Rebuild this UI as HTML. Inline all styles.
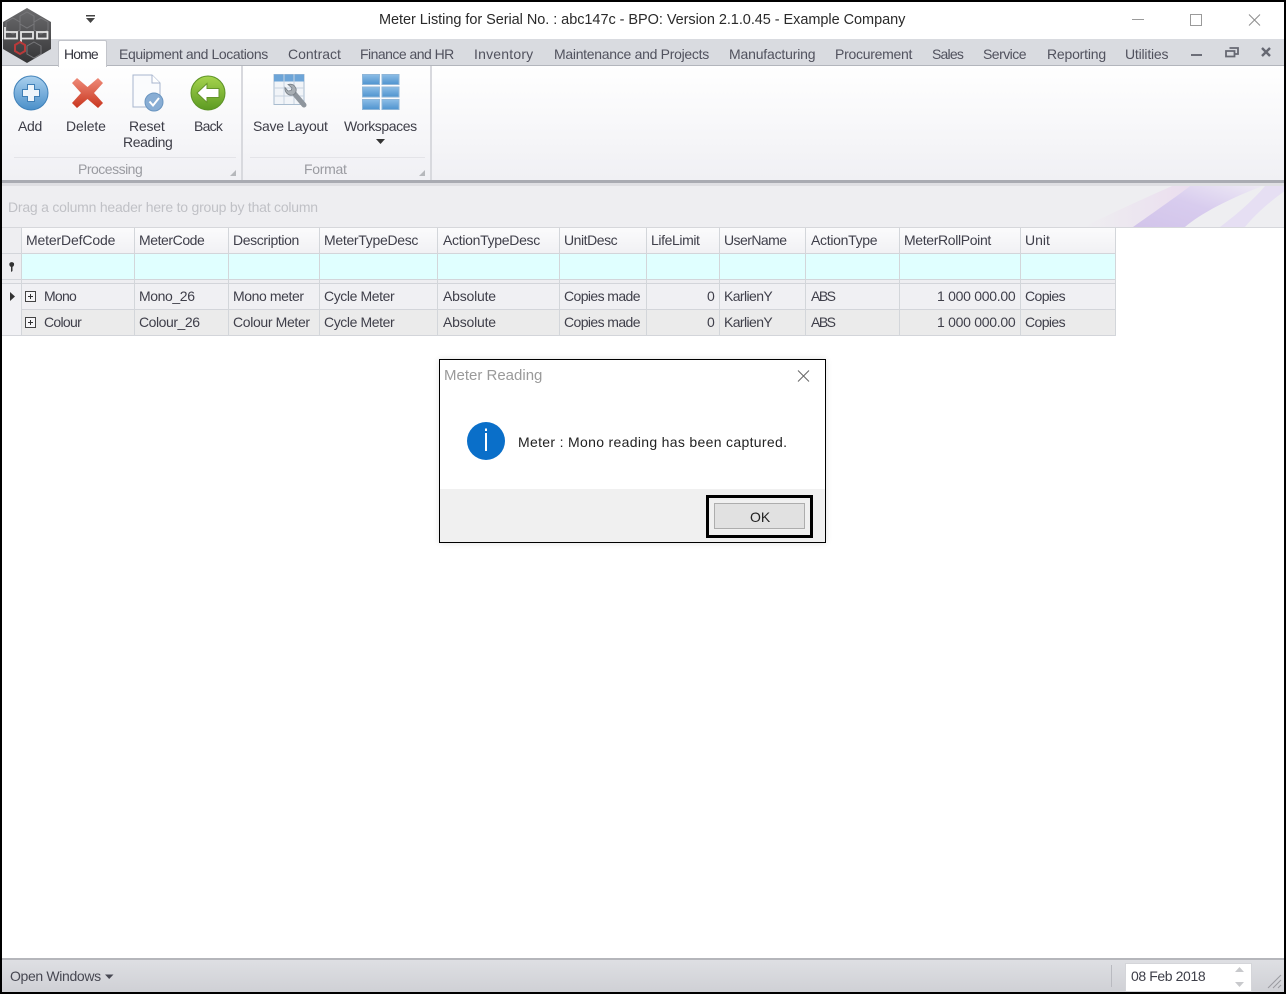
<!DOCTYPE html>
<html><head><meta charset="utf-8">
<style>
html,body{margin:0;padding:0;background:#fff}
#p{position:relative;width:1286px;height:994px;overflow:hidden;background:#fff;font-family:"Liberation Sans",sans-serif;font-size:14px;color:#3b3b45}
#p div,#p span.t{position:absolute}
.t{white-space:nowrap;line-height:16px}
.tab{top:46px;color:#51525e}
.rb{top:118px;color:#3d3d47}
.h{top:232px;color:#3f3f4a}
.c{color:#3f3f4a}
.v{background:#d3d6da;width:1px}
</style></head><body>
<div id="p">
<!-- ribbon tab strip -->
<div style="left:0;top:39px;width:1286px;height:26px;background:#d9dbe0"></div>
<div style="left:0;top:65px;width:1286px;height:1px;background:#b3b6bd"></div>
<!-- ribbon body -->
<div style="left:0;top:66px;width:1286px;height:114px;background:linear-gradient(#ffffff,#f0f0f4)"></div>
<div style="left:0;top:180px;width:1286px;height:3px;background:#a9abb2"></div>
<div style="left:0;top:183px;width:1286px;height:3px;background:#dfdfe3"></div>
<div style="left:241px;top:66px;width:2px;height:114px;background:#d8d9de"></div>
<div style="left:430px;top:66px;width:2px;height:114px;background:#d8d9de"></div>
<div style="left:14px;top:157px;width:222px;height:1px;background:#e4e4e8"></div>
<div style="left:250px;top:157px;width:175px;height:1px;background:#e4e4e8"></div>
<!-- Home tab -->
<div style="left:58px;top:40px;width:47px;height:26px;background:#fff;border:1px solid #c3c5cb;border-bottom:none;border-radius:2px 2px 0 0"></div>
<span class="t" style="left:64px;top:46px;color:#33333d;letter-spacing:-.9px">Home</span>
<span class="t tab" style="left:119px;letter-spacing:-.4px">Equipment and Locations</span>
<span class="t tab" style="left:288px">Contract</span>
<span class="t tab" style="left:360px;letter-spacing:-.53px">Finance and HR</span>
<span class="t tab" style="left:474px;letter-spacing:.2px">Inventory</span>
<span class="t tab" style="left:554px;letter-spacing:-.29px">Maintenance and Projects</span>
<span class="t tab" style="left:729px;letter-spacing:-.18px">Manufacturing</span>
<span class="t tab" style="left:835px;letter-spacing:-.27px">Procurement</span>
<span class="t tab" style="left:932px;letter-spacing:-.8px">Sales</span>
<span class="t tab" style="left:983px;letter-spacing:-.53px">Service</span>
<span class="t tab" style="left:1047px;letter-spacing:-.2px">Reporting</span>
<span class="t tab" style="left:1125px;letter-spacing:-.2px">Utilities</span>

<span class="t" style="left:379px;top:12px;font-size:14.5px;color:#2a2a2a;letter-spacing:-.05px">Meter Listing for Serial No. : abc147c - BPO: Version 2.1.0.45 - Example Company</span>

<svg style="position:absolute;left:0;top:0" width="1286" height="994" viewBox="0 0 1286 994">
<defs>
<linearGradient id="bl" x1="0" y1="0" x2="0" y2="1"><stop offset="0" stop-color="#aad0ee"/><stop offset="1" stop-color="#4a8fc9"/></linearGradient>
<linearGradient id="gr" x1="0" y1="0" x2="0" y2="1"><stop offset="0" stop-color="#a6d44e"/><stop offset="1" stop-color="#5c9a22"/></linearGradient>
<linearGradient id="rd" x1="0" y1="0" x2="0" y2="1"><stop offset="0" stop-color="#ee8a78"/><stop offset="1" stop-color="#c9361f"/></linearGradient>
<linearGradient id="wb" x1="0" y1="0" x2="0" y2="1"><stop offset="0" stop-color="#8cbde6"/><stop offset="1" stop-color="#4f94cf"/></linearGradient>
<linearGradient id="lg" x1="0" y1="0" x2="0" y2="1"><stop offset="0" stop-color="#6c6c6e"/><stop offset="1" stop-color="#343436"/></linearGradient>
</defs>
<!-- logo -->
<polygon points="27,8 51,22 51,49 27,63 3,49 3,22" fill="url(#lg)"/>
<g fill="none" stroke="#77777a" stroke-width="1">
<polygon points="27,12 34,16 34,24 27,28 20,24 20,16"/><polygon points="13,18 20,22 20,30 13,34 6,30 6,22"/><polygon points="41,18 48,22 48,30 41,34 34,30 34,22"/>
<polygon points="34,42 41,46 41,54 34,58 27,54 27,46"/>
</g>
<g fill="none" stroke="#e6e6e6" stroke-width="1.8">
<path d="M5,27V38.5H17V32H5"/><path d="M21,42V32H33V38.5H21"/><path d="M37,32H47.5V38.5H37Z"/>
</g>
<polygon points="20,42 25,45 25,51 20,54 15,51 15,45" fill="none" stroke="#b83a3a" stroke-width="2"/>
<!-- qat arrow -->
<rect x="86" y="15" width="9" height="1.5" fill="#444"/><polygon points="86,18 95,18 90.5,23" fill="#444"/>
<!-- window controls -->
<path d="M1132,19.5H1144" stroke="#9a9a9a" fill="none"/>
<rect x="1190.5" y="14.5" width="11" height="11" fill="none" stroke="#9a9a9a"/>
<path d="M1249,14.5L1260,25.5M1260,14.5L1249,25.5" stroke="#8c8c8c" fill="none"/>
<!-- mdi controls -->
<rect x="1191" y="54" width="11" height="2" fill="#6c6e78"/>
<path d="M1229.5,48H1238V54H1235M1226,51H1234.5V56.5H1226Z" fill="none" stroke="#666872" stroke-width="1.8"/>
<path d="M1262,48L1270,56M1270,48L1262,56" stroke="#666872" stroke-width="2.4" fill="none"/>
<!-- Add -->
<circle cx="31" cy="93" r="17" fill="url(#bl)" stroke="#3f80b8"/>
<path d="M27.5,84.5H34.5V89.5H39.5V96.5H34.5V101.5H27.5V96.5H22.5V89.5H27.5Z" fill="#eef5fb" stroke="#3f7fb6"/>
<!-- Delete -->
<path d="M72,83L77,78L87.5,87L98,78L103,83L94,93L103,103L98,108L87.5,99L77,108L72,103L81,93Z" fill="url(#rd)"/>
<!-- Reset Reading -->
<path d="M133,75H152L160,83V107H133Z" fill="#fafbfd" stroke="#a8b6ce"/>
<path d="M152,75V83H160" fill="#fff" stroke="#a8b6ce"/>
<circle cx="154" cy="102" r="9" fill="#88add4" stroke="#6a95c0"/>
<path d="M149.5,101.5L153,105.5L159,98" fill="none" stroke="#fff" stroke-width="2"/>
<!-- Back -->
<circle cx="208" cy="93" r="17" fill="url(#gr)" stroke="#5c9226"/>
<path d="M197,93L207,83.5V88.5H219V97.5H207V102.5Z" fill="#fff" stroke="#65952a"/>
<!-- Save Layout -->
<rect x="274" y="74.5" width="30" height="30" fill="#f1f4f8" stroke="#a9bccf"/>
<rect x="274" y="74.5" width="30" height="7" fill="#6da5d8"/>
<path d="M284,74V104M294,74V104M274,88H304M274,96H304" stroke="#c6d2df" fill="none"/>
<path d="M293,92L304,105" stroke="#8e959d" stroke-width="5" stroke-linecap="round" fill="none"/>
<path d="M288,84.5L292,88L291,90.5L288,91L285,87.5C284.5,92 288,96 292.5,95C296,94 297,90 295.5,87.5C294,84.5 291,83.8 288,84.5Z" fill="#a8aeb4" stroke="#777e86" stroke-width=".8"/>
<!-- Workspaces -->
<g fill="url(#wb)" stroke="#8fb6d8">
<rect x="362.5" y="74.5" width="17" height="10"/><rect x="382" y="74.5" width="17" height="10"/>
<rect x="362.5" y="87" width="17" height="10"/><rect x="382" y="87" width="17" height="10"/>
<rect x="362.5" y="99.5" width="17" height="10"/><rect x="382" y="99.5" width="17" height="10"/>
</g>
<polygon points="376,139 385,139 380.5,144" fill="#333"/>
<!-- ribbon corner glyphs -->
<polygon points="236,170 236,176 230,176" fill="#b6b8bc"/>
<polygon points="425,170 425,176 419,176" fill="#b6b8bc"/>
</svg>

<span class="t rb" style="left:18px;letter-spacing:-.3px">Add</span>
<span class="t rb" style="left:66px;letter-spacing:-.1px">Delete</span>
<span class="t rb" style="left:129px;letter-spacing:-.2px">Reset</span>
<span class="t rb" style="left:123px;top:134px;letter-spacing:-.4px">Reading</span>
<span class="t rb" style="left:194px;letter-spacing:-.75px">Back</span>
<span class="t rb" style="left:253px;letter-spacing:-.3px">Save Layout</span>
<span class="t rb" style="left:344px;letter-spacing:-.4px">Workspaces</span>
<span class="t" style="left:78px;top:161px;color:#9a9ba1;letter-spacing:-.5px">Processing</span>
<span class="t" style="left:304px;top:161px;color:#9a9ba1;letter-spacing:-.3px">Format</span>

<!-- group panel -->
<div style="left:0;top:186px;width:1286px;height:41px;background:#eeeef1"></div>
<svg style="position:absolute;left:1050px;top:186px" width="236" height="41" viewBox="0 0 236 41">
<defs>
<linearGradient id="pk" x1="0" y1="0" x2="1" y2="0"><stop offset="0" stop-color="#eeeef1"/><stop offset="1" stop-color="#ead9ee"/></linearGradient>
<linearGradient id="pu" x1="0" y1="1" x2="1" y2="0"><stop offset="0" stop-color="#d2c4ea"/><stop offset=".5" stop-color="#d8ccee"/><stop offset="1" stop-color="#eeeaf5"/></linearGradient>
</defs>
<path d="M33,41C60,28 95,12 122,0H172C150,12 110,28 83,41Z" fill="url(#pk)"/>
<path d="M83,41C110,22 130,8 140,0H213C180,12 150,28 135,41Z" fill="url(#pu)"/>
<path d="M170,41C190,26 205,12 215,0H236V4C222,14 205,28 195,41Z" fill="#e6dff3"/>
</svg>
<span class="t" style="left:8px;top:199px;color:#c0c1c6;letter-spacing:-.22px">Drag a column header here to group by that column</span>
<div style="left:0;top:227px;width:1286px;height:1px;background:#d6d7db"></div>

<!-- grid -->
<div style="left:0;top:228px;width:1116px;height:25px;background:linear-gradient(#fbfbfc,#f1f1f4)"></div>
<div style="left:0;top:228px;width:22px;height:25px;background:#eeeef1"></div>
<div style="left:0;top:253px;width:1116px;height:1px;background:#d3d5da"></div>
<div style="left:0;top:254px;width:22px;height:26px;background:#eeeef1"></div>
<div style="left:22px;top:254px;width:1094px;height:25px;background:#e0ffff"></div>
<div style="left:0;top:279px;width:1116px;height:1px;background:#d3d5da"></div>
<div style="left:0;top:280px;width:1116px;height:3px;background:#eeeef1"></div>
<div style="left:0;top:283px;width:1116px;height:1px;background:#d3d5da"></div>
<div style="left:0;top:284px;width:1116px;height:25px;background:#f0f0f3"></div>
<div style="left:0;top:309px;width:1116px;height:1px;background:#d3d5da"></div>
<div style="left:0;top:310px;width:1116px;height:25px;background:#ebebeb"></div>
<div style="left:0;top:284px;width:22px;height:51px;background:#f1f1f4"></div>
<div style="left:0;top:335px;width:1116px;height:1px;background:#d3d5da"></div>
<div class="v" style="left:21px;top:228px;height:108px"></div>
<div class="v" style="left:134px;top:228px;height:108px"></div>
<div class="v" style="left:228px;top:228px;height:108px"></div>
<div class="v" style="left:319px;top:228px;height:108px"></div>
<div class="v" style="left:437px;top:228px;height:108px"></div>
<div class="v" style="left:559px;top:228px;height:108px"></div>
<div class="v" style="left:646px;top:228px;height:108px"></div>
<div class="v" style="left:719px;top:228px;height:108px"></div>
<div class="v" style="left:805px;top:228px;height:108px"></div>
<div class="v" style="left:899px;top:228px;height:108px"></div>
<div class="v" style="left:1020px;top:228px;height:108px"></div>
<div class="v" style="left:1115px;top:228px;height:108px"></div>

<span class="t h" style="left:26px;letter-spacing:-.15px">MeterDefCode</span>
<span class="t h" style="left:139px;letter-spacing:-.43px">MeterCode</span>
<span class="t h" style="left:233px;letter-spacing:-.37px">Description</span>
<span class="t h" style="left:324px;letter-spacing:-.3px">MeterTypeDesc</span>
<span class="t h" style="left:443px;letter-spacing:-.3px">ActionTypeDesc</span>
<span class="t h" style="left:564px;letter-spacing:-.45px">UnitDesc</span>
<span class="t h" style="left:651px;letter-spacing:-.4px">LifeLimit</span>
<span class="t h" style="left:724px;letter-spacing:-.55px">UserName</span>
<span class="t h" style="left:811px;letter-spacing:-.3px">ActionType</span>
<span class="t h" style="left:904px;letter-spacing:-.35px">MeterRollPoint</span>
<span class="t h" style="left:1025px">Unit</span>

<span class="t c" style="left:44px;top:288px;letter-spacing:-.75px">Mono</span>
<span class="t c" style="left:139px;top:288px;letter-spacing:-.4px">Mono_26</span>
<span class="t c" style="left:233px;top:288px;letter-spacing:-.4px">Mono meter</span>
<span class="t c" style="left:324px;top:288px;letter-spacing:-.4px">Cycle Meter</span>
<span class="t c" style="left:443px;top:288px;letter-spacing:-.2px">Absolute</span>
<span class="t c" style="left:564px;top:288px;letter-spacing:-.6px">Copies made</span>
<span class="t c" style="left:707px;top:288px">0</span>
<span class="t c" style="left:724px;top:288px;letter-spacing:-.6px">KarlienY</span>
<span class="t c" style="left:811px;top:288px;letter-spacing:-1.5px">ABS</span>
<span class="t c" style="left:937px;top:288px;letter-spacing:-.28px">1 000 000.00</span>
<span class="t c" style="left:1025px;top:288px;letter-spacing:-.6px">Copies</span>

<span class="t c" style="left:44px;top:314px;letter-spacing:-.7px">Colour</span>
<span class="t c" style="left:139px;top:314px;letter-spacing:-.45px">Colour_26</span>
<span class="t c" style="left:233px;top:314px;letter-spacing:-.35px">Colour Meter</span>
<span class="t c" style="left:324px;top:314px;letter-spacing:-.4px">Cycle Meter</span>
<span class="t c" style="left:443px;top:314px;letter-spacing:-.2px">Absolute</span>
<span class="t c" style="left:564px;top:314px;letter-spacing:-.6px">Copies made</span>
<span class="t c" style="left:707px;top:314px">0</span>
<span class="t c" style="left:724px;top:314px;letter-spacing:-.6px">KarlienY</span>
<span class="t c" style="left:811px;top:314px;letter-spacing:-1.5px">ABS</span>
<span class="t c" style="left:937px;top:314px;letter-spacing:-.28px">1 000 000.00</span>
<span class="t c" style="left:1025px;top:314px;letter-spacing:-.6px">Copies</span>

<svg style="position:absolute;left:0;top:250px" width="40" height="90" viewBox="0 250 40 90">
<path d="M9.5,263H14L12.5,267V271L11,272V267Z" fill="#333"/>
<circle cx="11.7" cy="264.5" r="2.4" fill="#333"/>
<polygon points="10,292 15,296.5 10,301" fill="#333"/>
<rect x="25.5" y="291.5" width="10" height="10" fill="#f6f6f8" stroke="#444"/>
<path d="M28,296.5H33M30.5,294V299" stroke="#333" fill="none"/>
<rect x="25.5" y="317.5" width="10" height="10" fill="#f6f6f8" stroke="#444"/>
<path d="M28,322.5H33M30.5,320V325" stroke="#333" fill="none"/>
</svg>

<!-- status bar -->
<div style="left:0;top:958px;width:1286px;height:2px;background:#b5b6bb"></div>
<div style="left:0;top:960px;width:1286px;height:33px;background:linear-gradient(#dedfe3,#cfd0d5)"></div>
<span class="t" style="left:10px;top:968px;color:#474852;letter-spacing:-.35px">Open Windows</span>
<div style="left:1125px;top:963px;width:125px;height:27px;background:#fff;border:1px solid #d4d5d9"></div>
<svg style="position:absolute;left:0;top:950px" width="1286" height="44" viewBox="0 950 1286 44">
<polygon points="105,974.5 113.5,974.5 109.2,979" fill="#474852"/>
<rect x="1111" y="965" width="1" height="22" fill="#b9bac0"/>
<path d="M1268,988L1281,975M1273,988L1281,980M1278,988L1281,985" stroke="#9a9ba0" fill="none"/>
<polygon points="1235,972 1244,972 1239.5,967" fill="#c8c9cc"/>
<polygon points="1235,982 1244,982 1239.5,987" fill="#c8c9cc"/>
</svg>
<span class="t" style="left:1131px;top:968px;color:#3d3e48;letter-spacing:-.4px">08 Feb 2018</span>

<!-- dialog -->
<div style="left:439px;top:359px;width:385px;height:182px;background:#fff;border:1px solid #000;box-shadow:0 0 6px rgba(0,0,0,.12)"></div>
<div style="left:440px;top:489px;width:385px;height:53px;background:#f0f0f0"></div>
<span class="t" style="left:444px;top:368px;font-size:15px;color:#9a9a9a">Meter Reading</span>
<svg style="position:absolute;left:430px;top:350px" width="410" height="200" viewBox="430 350 410 200">
<path d="M798,370.5L809,381.5M809,370.5L798,381.5" stroke="#666" fill="none"/>
<circle cx="486" cy="441" r="19" fill="#0a6fc9"/>
<rect x="485" y="433" width="2" height="18" fill="#fff"/><rect x="485" y="428.5" width="2" height="2.5" fill="#fff"/>
</svg>
<span class="t" style="left:518px;top:434px;color:#222;letter-spacing:.32px">Meter : Mono reading has been captured.</span>
<div style="left:706px;top:495px;width:101px;height:37px;border:3px solid #000;background:#f0f0f0"></div>
<div style="left:714px;top:503px;width:89px;height:24px;background:#e1e1e1;border:1px solid #adadad"></div>
<span class="t" style="left:750px;top:509px;color:#222">OK</span>

<!-- outer frame -->
<div style="left:0;top:0;width:1282px;height:990px;border:2px solid #000;background:transparent"></div>
</div>
</body></html>
